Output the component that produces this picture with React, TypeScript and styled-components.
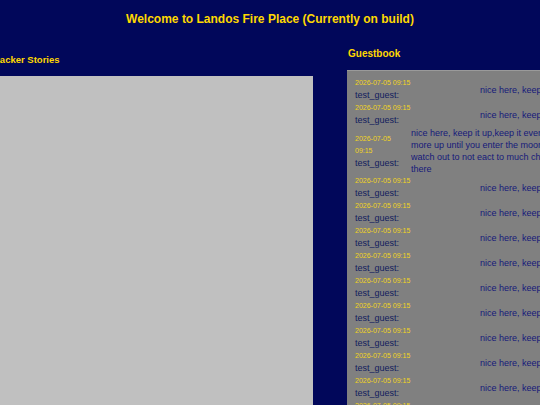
import React from "react";
import styled, { createGlobalStyle } from "styled-components";

const GlobalStyle = createGlobalStyle`
  html, body {
    margin: 0;
    padding: 0;
    background: #01075a;
    overflow: hidden;
  }
  body {
    font-family: "Liberation Sans", Arial, sans-serif;
  }
`;

const Page = styled.div`
  width: 540px;
  min-height: 405px;
  background: #01075a;
`;

const Title = styled.h1`
  margin: 0;
  padding-top: 12px;
  font-size: 12px;
  line-height: 14px;
  font-weight: bold;
  text-align: center;
  color: #ffd800;
`;

const Columns = styled.div`
  display: flex;
  justify-content: center;
  align-items: flex-start;
  gap: 34px;
  margin-top: 14px;
`;

const Column = styled.section<{ $width: number }>`
  flex: 0 0 ${(p) => p.$width}px;
  width: ${(p) => p.$width}px;
`;

const Heading = styled.h2<{ $top: number; $inset: number; $size: number }>`
  margin: 0 0 9px;
  padding: ${(p) => p.$top}px 0 0 ${(p) => p.$inset}px;
  font-size: ${(p) => p.$size}px;
  line-height: 14px;
  font-weight: bold;
  color: #ffd800;
`;

const StoriesPanel = styled.div`
  background: #c0c0c0;
  height: 400px;
`;

const GuestPanel = styled.div`
  background: #808080;
  border-top: 1px solid #9a9a9a;
  padding: 6px 8px 8px;
  min-height: 400px;
`;

const Entry = styled.div`
  display: flex;
  align-items: center;
  justify-content: space-between;
  gap: 12px;
`;

const Meta = styled.div`
  display: flex;
  flex-direction: column;
`;

const Stamp = styled.span`
  font-size: 7px;
  line-height: 12px;
  color: #f2d420;
`;

const Name = styled.span`
  font-size: 9px;
  line-height: 13px;
  color: #121c5e;
`;

const Message = styled.p`
  margin: 0;
  font-size: 9px;
  line-height: 12px;
  color: #16197a;
`;

const SHORT = "nice here, keep it up";
const LONG =
  "nice here, keep it up,keep it even more up until you enter the moon, watch out to not eact to much cheese there";

const entries = Array.from({ length: 14 }, (_, i) => ({
  id: i,
  date: "2026-07-05 09:15",
  name: "test_guest:",
  text: i === 2 ? LONG : SHORT,
}));

export default function App() {
  return (
    <Page>
      <GlobalStyle />
      <Title>Welcome to Landos Fire Place (Currently on build)</Title>
      <Columns>
        <Column $width={342}>
          <Heading $top={13} $inset={22} $size={9.5}>
            Hacker Stories
          </Heading>
          <StoriesPanel />
        </Column>
        <Column $width={222}>
          <Heading $top={7} $inset={1} $size={10}>
            Guestbook
          </Heading>
          <GuestPanel>
            {entries.map((e) => (
              <Entry key={e.id}>
                <Meta>
                  <Stamp>{e.date}</Stamp>
                  <Name>{e.name}</Name>
                </Meta>
                <Message>{e.text}</Message>
              </Entry>
            ))}
          </GuestPanel>
        </Column>
      </Columns>
    </Page>
  );
}
